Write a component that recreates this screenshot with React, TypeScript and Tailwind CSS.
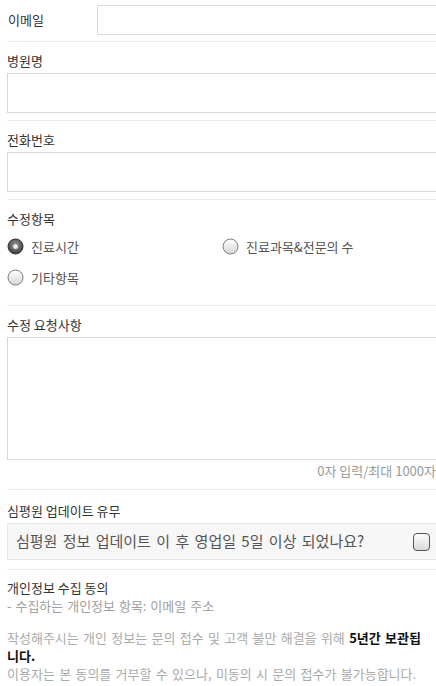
const fontStack = { fontFamily: '"Noto Sans CJK KR", "Noto Sans", sans-serif' };

function Radio({ checked }: { checked?: boolean }) {
  if (checked) {
    return (
      <svg width="17" height="17" viewBox="0 0 17 17" className="shrink-0">
        <defs>
          <radialGradient id="rOn" cx="50%" cy="40%" r="60%">
            <stop offset="0%" stopColor="#9a9a9a" />
            <stop offset="100%" stopColor="#3a3a3a" />
          </radialGradient>
        </defs>
        <circle cx="8.5" cy="8.5" r="7.5" fill="url(#rOn)" stroke="#2e2e2e" />
        <circle cx="8.5" cy="8.5" r="2.6" fill="#f2f2f2" stroke="#888" strokeWidth="0.6" />
      </svg>
    );
  }
  return (
    <svg width="17" height="17" viewBox="0 0 17 17" className="shrink-0">
      <defs>
        <linearGradient id="rOff" x1="0" y1="0" x2="0" y2="1">
          <stop offset="0%" stopColor="#ffffff" />
          <stop offset="100%" stopColor="#d6d6d6" />
        </linearGradient>
      </defs>
      <circle cx="8.5" cy="8.5" r="7.5" fill="url(#rOff)" stroke="#7a7a7a" />
    </svg>
  );
}

function Label({ children }: { children: React.ReactNode }) {
  return <div className="h-[18px] leading-[18px] text-[13px] text-[#333]">{children}</div>;
}

export default function App() {
  return (
    <div className="w-[436px] h-[686px] overflow-hidden bg-white" style={fontStack}>
      <div className="w-[443px] px-[7px]">
        {/* 이메일 */}
        <div className="flex items-center pt-[5px] pb-[6px] border-b border-[#ebebeb]">
          <div className="w-[90px] pl-px text-[13px] text-[#333]">이메일</div>
          <div className="flex-1 h-[30px] border border-[#d9d9d9] border-r-0" />
        </div>

        {/* 병원명 */}
        <div className="pt-[10px] pb-[7px] border-b border-[#ebebeb]">
          <Label>병원명</Label>
          <div className="mt-[3px] h-[40px] border border-[#d9d9d9] border-r-0" />
        </div>

        {/* 전화번호 */}
        <div className="pt-[10px] pb-[7px] border-b border-[#ebebeb]">
          <Label>전화번호</Label>
          <div className="mt-[3px] h-[40px] border border-[#d9d9d9] border-r-0" />
        </div>

        {/* 수정항목 */}
        <div className="pt-[10px] pb-[12px] border-b border-[#ebebeb]">
          <Label>수정항목</Label>
          <div className="grid grid-cols-[215px_1fr] mt-[3px]">
            <div className="h-[31px] flex items-center gap-[7px] text-[13px] text-[#555]">
              <Radio checked />
              <span>진료시간</span>
            </div>
            <div className="h-[31px] flex items-center gap-[7px] text-[13px] text-[#555]">
              <Radio />
              <span>진료과목&amp;전문의 수</span>
            </div>
            <div className="h-[31px] flex items-center gap-[7px] text-[13px] text-[#555]">
              <Radio />
              <span>기타항목</span>
            </div>
          </div>
        </div>

        {/* 수정 요청사항 */}
        <div className="pt-[10px] pb-[10px] border-b border-[#ebebeb]">
          <Label>수정 요청사항</Label>
          <div className="mt-[3px] h-[123px] border border-[#d9d9d9] border-r-0" />
          <div className="mt-[3px] text-right text-[13px] leading-[16px] text-[#999]">0자 입력/최대 1000자</div>
        </div>

        {/* 심평원 업데이트 유무 */}
        <div className="pt-[12px] pb-[9px] border-b border-[#ebebeb]">
          <Label>심평원 업데이트 유무</Label>
          <div className="mt-[3px] h-[37px] flex items-center justify-between pl-[8px] pr-[6px] bg-[#f7f7f7] border border-[#e6e6e6] border-r-0">
            <span className="text-[15px] text-[#555] [word-spacing:2px]">심평원 정보 업데이트 이 후 영업일 5일 이상 되었나요?</span>
            <span className="w-[17px] h-[18px] rounded-[4px] border border-[#555] bg-gradient-to-b from-white to-[#d8d8d8]" />
          </div>
        </div>

        {/* 개인정보 수집 동의 */}
        <div className="pt-[9px] text-[13px] leading-[18px]">
          <div className="text-[#333]">개인정보 수집 동의</div>
          <div className="text-[#a0a0a0] [word-spacing:1px]">- 수집하는 개인정보 항목: 이메일 주소</div>
          <p className="mt-[14px] pr-[9px] text-[#aaa] [word-spacing:1.4px]">
            작성해주시는 개인 정보는 문의 접수 및 고객 불만 해결을 위해{" "}
            <b className="text-[#111] font-bold leading-[18px]">5년간 보관됩니다.</b>
            <br />
            이용자는 본 동의를 거부할 수 있으나, 미동의 시 문의 접수가 불가능합니다.
          </p>
        </div>
      </div>
    </div>
  );
}
